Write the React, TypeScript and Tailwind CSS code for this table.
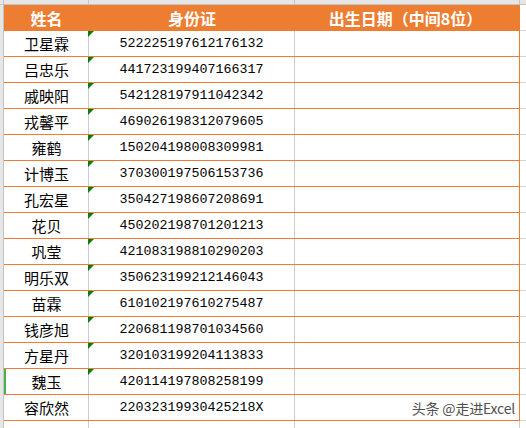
import React from "react";

const rows: [string, string][] = [
  ["卫星霖", "522225197612176132"],
  ["吕忠乐", "441723199407166317"],
  ["戚映阳", "542128197911042342"],
  ["戎馨平", "469026198312079605"],
  ["雍鹤", "150204198008309981"],
  ["计博玉", "370300197506153736"],
  ["孔宏星", "350427198607208691"],
  ["花贝", "450202198701201213"],
  ["巩莹", "421083198810290203"],
  ["明乐双", "350623199212146043"],
  ["苗霖", "610102197610275487"],
  ["钱彦旭", "220681198701034560"],
  ["方星丹", "320103199204113833"],
  ["魏玉", "420114197808258199"],
  ["容欣然", "22032319930425218X"],
];

const cjk = { fontFamily: '"Noto Sans CJK SC", "Noto Sans", sans-serif' };
const mono = { fontFamily: '"Liberation Mono", "DejaVu Sans Mono", monospace' };

export default function App() {
  return (
    <div className="w-[526px] h-[428px] bg-white overflow-hidden" style={cjk}>
      {/* column header strip */}
      <div className="flex h-[5px]">
        <div className="w-[4px] bg-[#e6e6e6] border-r border-b border-[#c4c4c4]" />
        <div className="w-[85px] bg-[#e6e6e6] border-r border-b border-[#c4c4c4]" />
        <div className="w-[206px] bg-[#e6e6e6] border-r border-b border-[#c4c4c4]" />
        <div className="w-[225px] bg-[#e6e6e6] border-r border-b border-[#c4c4c4]" />
        <div className="flex-1 bg-[#e6e6e6] border-b border-[#c4c4c4]" />
      </div>

      {/* header row */}
      <div className="flex h-[26px]">
        <div className="w-[4px] bg-[#e6e6e6] border-r border-[#c4c4c4]" />
        <div className="w-[516px] flex bg-[#ED7D31] text-white font-bold text-[16px] leading-none">
          <div className="w-[85px] flex items-center justify-center">姓名</div>
          <div className="w-[206px] flex items-center justify-center">身份证</div>
          <div className="flex-1 flex items-center justify-center pr-[4px]">出生日期（中间8位）</div>
        </div>
        <div className="flex-1 border-b border-[#d4d4d4]" />
      </div>

      {/* data rows */}
      {rows.map(([name, id], i) => {
        const isText = !id.endsWith("X");
        const selected = i === 13;
        const last = i === rows.length - 1;
        return (
          <div key={i} className="flex h-[26px]">
            <div className="w-[4px] bg-[#e6e6e6] border-r border-[#c4c4c4]" />
            <div className="w-[516px] flex border-b border-r border-[#ED7D31]">
              <div
                className={
                  "w-[85px] flex items-center justify-center border-r border-[#cccccc] text-[15px] text-black leading-none pl-[1px] " +
                  (selected ? "shadow-[inset_2px_0_0_#4caf50]" : "")
                }
              >
                {name}
              </div>
              <div className="w-[206px] relative flex items-center justify-center border-r border-[#cccccc] text-[13.33px] text-black leading-none" style={mono}>
                {isText && (
                  <div className="absolute left-[-1px] top-0 w-[6px] h-[6px] bg-[#0a7d0a] [clip-path:polygon(0_0,100%_0,0_100%)]" />
                )}
                <span className="pt-[1px]">{id}</span>
              </div>
              <div className="flex-1 flex items-center justify-end pr-[4px]">
                {last && (
                  <span className="text-[14px] text-[#505050] leading-none tracking-[-0.2px] [text-shadow:0_0_2px_#ffffff]" style={cjk}>
                    头条 @走进Excel
                  </span>
                )}
              </div>
            </div>
            <div className="flex-1 border-b border-[#d4d4d4]" />
          </div>
        );
      })}

      {/* filler below */}
      <div className="flex h-[7px]">
        <div className="w-[4px] bg-[#e6e6e6] border-r border-[#c4c4c4]" />
        <div className="w-[85px] border-r border-[#cccccc]" />
        <div className="w-[206px] border-r border-[#cccccc]" />
        <div className="w-[225px] border-r border-[#cccccc]" />
        <div className="flex-1" />
      </div>
    </div>
  );
}
